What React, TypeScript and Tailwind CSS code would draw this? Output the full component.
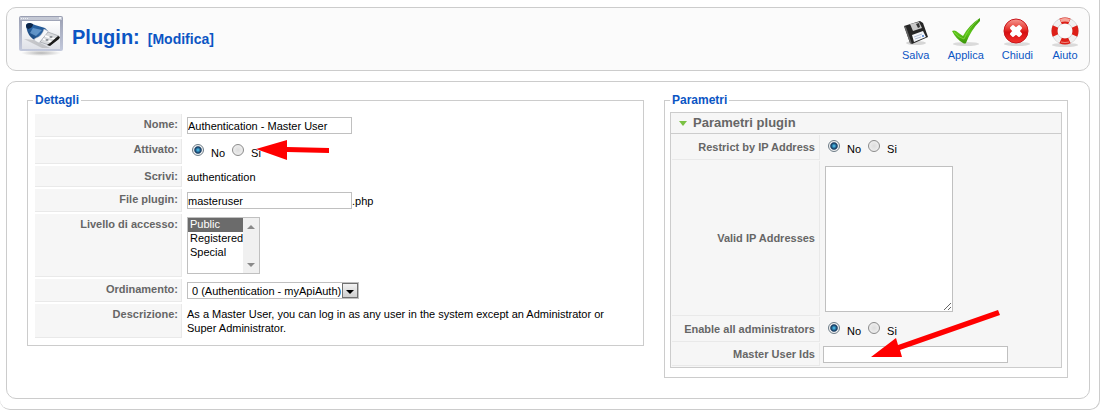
import type { ReactNode } from 'react';

interface ToolbarButtonProps {
  label: string;
  children: ReactNode;
}

function ToolbarButton({ label, children }: ToolbarButtonProps) {
  return (
    <button type="button" className="flex flex-col items-center text-[11px] leading-[14px] text-[#0b55c4] cursor-pointer">
      <svg className="w-7 h-8" viewBox="0 0 28 32" aria-hidden="true">
        {children}
      </svg>
      {label}
    </button>
  );
}

function PluginIcon() {
  return (
    <svg className="w-12 h-12 shrink-0" viewBox="0 0 48 48" aria-hidden="true">
      <defs>
        <linearGradient id="win" x1="0" y1="0" x2="0" y2="1">
          <stop offset="0" stopColor="#9a9fb2" />
          <stop offset="1" stopColor="#c3c9dc" />
        </linearGradient>
        <linearGradient id="pane" x1="0" y1="0" x2="0" y2="1">
          <stop offset="0" stopColor="#ffffff" />
          <stop offset="1" stopColor="#dfe1e8" />
        </linearGradient>
        <linearGradient id="usb" x1="0" y1="1" x2="1" y2="0">
          <stop offset="0" stopColor="#0f2f5c" />
          <stop offset="0.5" stopColor="#2a65a5" />
          <stop offset="1" stopColor="#1a4a85" />
        </linearGradient>
        <radialGradient id="winShadow">
          <stop offset="0" stopColor="#888888" stopOpacity="0.6" />
          <stop offset="1" stopColor="#888888" stopOpacity="0" />
        </radialGradient>
      </defs>
      <ellipse cx="24" cy="38" rx="20" ry="3" fill="url(#winShadow)" />
      <rect x="2" y="1" width="44" height="35" rx="2" fill="url(#win)" />
      <rect x="3" y="2" width="42" height="3" fill="#c4c8d4" />
      <path d="M4 3.500H11" stroke="#eef0f5" strokeDasharray="1 1" />
      <rect x="42" y="2" width="2" height="2" fill="#eef0f5" />
      <rect x="5" y="6" width="38" height="28" fill="url(#pane)" />
      <path d="M7 24L18 25L33 33L25 33z" fill="#777777" opacity="0.3" />
      <path d="M9 11q0-3 4-3l5 2l10 3l3 3l-9 11l-6-3q-5-4-6-9z" fill="url(#usb)" />
      <path d="M9 11q0-3 4-3l3 1q0 4-5 5q-2-1-2-3z" fill="#0c2548" />
      <path d="M16 13l9 2l-6 6l-6-3z" fill="#79a9d8" opacity="0.7" />
      <path d="M27 14l4 2l0 2l-9 10l-4-2q-2-2 1-3q6-2 8-9z" fill="#f6f7f9" stroke="#b0b5bf" strokeWidth="0.500" />
      <path d="M31 17l11 4l-10 9l-9-3z" fill="#d8dadd" stroke="#858991" strokeWidth="0.500" />
      <path d="M28 21l10 3M26 24l9 3" stroke="#ffffff" strokeWidth="1.500" />
      <path d="M41 21l2 1l-1 2l-9 7l-3-1l3-2z" fill="#1b1b1b" />
      <path d="M34 21l2 1l-2 1l-2-1zM30 24l2 1l-2 1l-2-1z" fill="#777b82" />
    </svg>
  );
}

function SaveGlyph() {
  return (
    <>
      <ellipse cx="14" cy="27" rx="10" ry="2" fill="#d6d6d6" />
      <path d="M2 10L18 5L21 7L26 21L10 28L8 27z" fill="#262626" />
      <path d="M2 10L8 27L10 28L4 11z" fill="#666666" />
      <path d="M8 8L17 6L20 12L11 15z" fill="#c9c9c9" />
      <path d="M14 8L17 7L18 11L16 12z" fill="#333333" />
      <path d="M10 19L21 15L24 21L12 26z" fill="#f5f7fb" />
      <path d="M12 21L20 18M13 23L19 21" stroke="#b3bfd6" />
      <circle cx="21" cy="20" r="1" fill="#4a7fd0" />
    </>
  );
}

function ApplyGlyph() {
  return (
    <>
      <defs>
        <linearGradient id="check" x1="0" y1="0" x2="0" y2="1">
          <stop offset="0" stopColor="#3c9a0c" />
          <stop offset="0.6" stopColor="#5cc41a" />
          <stop offset="1" stopColor="#3a9408" />
        </linearGradient>
      </defs>
      <ellipse cx="14" cy="28" rx="13" ry="2" fill="#dadada" />
      <path d="M0 15q2-1 4 0q4 3 7 5q6-11 17-18l0 3q-9 9-14 22q-1 1-3 0Q4 23 0 15z" fill="url(#check)" />
      <path d="M2 16q5 6 10 7q5-12 14-19" fill="none" stroke="#8fe04a" opacity="0.7" />
    </>
  );
}

function CloseGlyph() {
  return (
    <>
      <defs>
        <linearGradient id="ball" x1="0" y1="0" x2="0" y2="1">
          <stop offset="0" stopColor="#f59a92" />
          <stop offset="0.45" stopColor="#e52d27" />
          <stop offset="0.55" stopColor="#d60f12" />
          <stop offset="1" stopColor="#f3322c" />
        </linearGradient>
      </defs>
      <ellipse cx="14" cy="28" rx="13" ry="2" fill="#dadada" />
      <circle cx="13" cy="15" r="12" fill="url(#ball)" stroke="#c9151b" />
      <path
        d="M8 12L10 10L13 12.500L16 10L18 12L15.500 15L18 18L16 20L13 17.500L10 20L8 18L10.500 15z"
        fill="#ffffff"
        stroke="#ffffff"
        strokeWidth="2"
        strokeLinejoin="round"
      />
    </>
  );
}

function HelpGlyph() {
  return (
    <>
      <ellipse cx="14" cy="29" rx="13" ry="2" fill="#dadada" />
      <circle cx="14" cy="15" r="10.500" fill="none" stroke="#c4c4c4" strokeWidth="6" />
      <circle cx="14" cy="15" r="10.500" fill="none" stroke="#f0f0f0" strokeWidth="5" />
      <circle
        cx="14"
        cy="15"
        r="10.500"
        fill="none"
        stroke="#dd2018"
        strokeWidth="6"
        pathLength="80"
        strokeDasharray="11 9"
        strokeDashoffset="5.500"
      />
      <path d="M9 3q5-2 10 0l-1 3q-4-1-8 0z" fill="#f6a79c" />
      <path d="M10 26q4 1 8 0" stroke="#f08a80" fill="none" />
    </>
  );
}

interface RadioPairProps {
  name: string;
  label: string;
}

function RadioPair({ name, label }: RadioPairProps) {
  const radio =
    'appearance-none w-3 h-3 mt-px rounded-full border border-[#8b8b8b] bg-radial from-[#dddddd] to-[#f4f4f4] checked:border-[#6d7c87] checked:bg-radial checked:from-[#4cc0ee] checked:from-5% checked:via-[#12365c] checked:via-45% checked:to-[#f0f0f0] checked:to-60%';
  return (
    <div role="radiogroup" aria-label={label} className="flex pl-[5px] gap-[7px]">
      <label className="flex gap-[7px]">
        <input type="radio" name={name} defaultChecked className={radio} />
        <span className="pt-[3px] leading-[14px]">No</span>
      </label>
      <label className="flex gap-[7px]">
        <input type="radio" name={name} className={radio} />
        <span className="pt-[3px] leading-[14px]">Si</span>
      </label>
    </div>
  );
}

interface RowProps {
  label: string;
  htmlFor?: string;
  height: string;
  children: ReactNode;
}

function Row({ label, htmlFor, height, children }: RowProps) {
  return (
    <tr className={height}>
      <th
        scope="row"
        className="w-[147px] bg-[#f6f6f6] border-b border-r border-[#e9e9e9] pr-[3px] pt-[3px] text-right align-top font-bold text-[#666666]"
      >
        {htmlFor ? <label htmlFor={htmlFor}>{label}</label> : label}
      </th>
      <td className="relative pl-[3px] align-middle">{children}</td>
    </tr>
  );
}

function ParamRow({ label, htmlFor, height, children }: RowProps) {
  return (
    <tr className={height}>
      <th
        scope="row"
        className="w-[148px] border-b border-r border-[#e9e9e9] pr-1 text-right align-middle font-bold text-[#666666]"
      >
        {htmlFor ? <label htmlFor={htmlFor}>{label}</label> : label}
      </th>
      <td className="relative pl-[2px] align-middle">{children}</td>
    </tr>
  );
}

export default function App() {
  const field = 'h-[17px] bg-white border border-[#c0c0c0] text-[11px] leading-[14px] text-black outline-none';

  return (
    <div className="bg-white font-['Liberation_Sans',Arial,sans-serif] text-[11px] leading-[14px] text-black">
      <div className="mr-[3px] pl-[6px] pr-[9px] pt-[7px] pb-[10px] border-r border-b border-[#cccccc] rounded-b-[10px]">
        <header className="flex items-start justify-between h-16 px-[10px] bg-[#fbfbfb] border border-[#cccccc] rounded-[10px]">
          <div className="flex items-start gap-[7px] pt-[7px]">
            <PluginIcon />
            <h1 className="flex items-baseline gap-2 pt-[9px] text-xl leading-[26px] font-bold text-[#0b55c4]">
              Plugin: <small className="text-sm">[Modifica]</small>
            </h1>
          </div>
          <div className="flex gap-[18px] pt-2">
            <ToolbarButton label="Salva"><SaveGlyph /></ToolbarButton>
            <ToolbarButton label="Applica"><ApplyGlyph /></ToolbarButton>
            <ToolbarButton label="Chiudi"><CloseGlyph /></ToolbarButton>
            <ToolbarButton label="Aiuto"><HelpGlyph /></ToolbarButton>
          </div>
        </header>

        <main className="flex items-start gap-5 mt-[10px] pl-5 pr-[21px] pt-[10px] pb-5 border border-[#cccccc] rounded-[10px]">
          <fieldset className="flex-1 min-w-0 border border-[#cccccc] px-[5px] pb-[5px]">
            <legend className="px-[2px] text-xs leading-4 font-bold text-[#0b55c4]">Dettagli</legend>
            <table className="w-full mt-1 border-separate border-spacing-[2px]">
              <tbody>
                <Row label="Nome:" htmlFor="name" height="h-[23px]">
                  <input id="name" type="text" defaultValue="Authentication - Master User" className={`${field} block w-[165px]`} />
                </Row>
                <Row label="Attivato:" height="h-[25px]">
                  <RadioPair name="published" label="Attivato" />
                  <svg className="absolute left-[72px] top-0 w-[74px] h-[23px]" viewBox="0 0 74 23" aria-hidden="true">
                    <path d="M0 10L31 1V8L73 9V14L31 13V21z" fill="#ff0000" />
                  </svg>
                </Row>
                <Row label="Scrivi:" height="h-[21px]">authentication</Row>
                <Row label="File plugin:" htmlFor="file" height="h-[23px]">
                  <div className="flex items-center">
                    <input id="file" type="text" defaultValue="masteruser" className={`${field} w-[165px]`} />
                    .php
                  </div>
                </Row>
                <Row label="Livello di accesso:" htmlFor="access" height="h-[63px]">
                  <div className="flex w-[73px] h-[57px] border border-[#c0c0c0] bg-white">
                    <select
                      id="access"
                      size={4}
                      defaultValue="public"
                      className="appearance-none w-[55px] h-full overflow-hidden text-[11px] outline-none"
                    >
                      <option value="public" className="h-[14px] min-h-0 px-[2px] py-0 leading-[14px] checked:bg-[#6b6b6b] checked:text-white">Public</option>
                      <option value="registered" className="h-[14px] min-h-0 px-[2px] py-0 leading-[14px]">Registered</option>
                      <option value="special" className="h-[14px] min-h-0 px-[2px] py-0 leading-[14px]">Special</option>
                    </select>
                    <svg className="w-4 h-full bg-[#f0f0f0]" viewBox="0 0 16 55" aria-hidden="true">
                      <path d="M4 11L8 7L12 11z" fill="#8a8a8a" />
                      <path d="M4 45H12L8 49z" fill="#8a8a8a" />
                    </svg>
                  </div>
                </Row>
                <Row label="Ordinamento:" htmlFor="order" height="h-[23px]">
                  <div className="relative w-[172px]">
                    <select id="order" className={`${field} block appearance-none w-full pl-1`}>
                      <option>0 (Authentication - myApiAuth)</option>
                    </select>
                    <span className="absolute right-px top-px w-4 h-[15px] flex items-end justify-center pb-[3px] border border-[#707070] bg-linear-to-b from-[#f2f2f2] to-[#cfcfcf] pointer-events-none">
                      <svg className="w-2 h-1" viewBox="0 0 8 4" aria-hidden="true">
                        <path d="M0 0H8L4 4z" fill="#000000" />
                      </svg>
                    </span>
                  </div>
                </Row>
                <Row label="Descrizione:" height="h-[34px]">
                  <p className="max-w-[430px]">
                    As a Master User, you can log in as any user in the system except an Administrator or Super Administrator.
                  </p>
                </Row>
              </tbody>
            </table>
          </fieldset>

          <fieldset className="w-[404px] shrink-0 border border-[#cccccc] px-[5px] pb-[9px]">
            <legend className="px-[2px] text-xs leading-4 font-bold text-[#0b55c4]">Parametri</legend>
            <div className="mt-1 border border-[#cccccc] bg-[#f6f6f6]">
              <h3 className="flex items-center gap-[6px] h-[21px] pl-2 border-b border-[#cccccc] text-[13px] font-bold text-[#666666]">
                <svg className="w-2 h-[5px]" viewBox="0 0 8 5" aria-hidden="true">
                  <path d="M0 0H8L4 5z" fill="#7ac143" />
                </svg>
                Parametri plugin
              </h3>
              <table className="w-full border-separate border-spacing-px">
                <tbody>
                  <ParamRow label="Restrict by IP Address" height="h-[25px]">
                    <RadioPair name="restrict" label="Restrict by IP Address" />
                  </ParamRow>
                  <ParamRow label="Valid IP Addresses" htmlFor="ips" height="h-[155px]">
                    <textarea id="ips" className="block ml-[2px] w-32 h-[146px] bg-white border border-[#c0c0c0] outline-none" />
                  </ParamRow>
                  <ParamRow label="Enable all administrators" height="h-[25px]">
                    <RadioPair name="admins" label="Enable all administrators" />
                  </ParamRow>
                  <ParamRow label="Master User Ids" htmlFor="ids" height="h-[23px]">
                    <input id="ids" type="text" className={`${field} block w-[185px]`} />
                    <svg className="absolute left-[50px] bottom-2 w-[130px] h-12" viewBox="0 0 130 48" aria-hidden="true">
                      <path d="M0 47L25 28L27 35L127 0L129 5L29 40L31 47z" fill="#ff0000" />
                    </svg>
                  </ParamRow>
                </tbody>
              </table>
            </div>
          </fieldset>
        </main>
      </div>
    </div>
  );
}
